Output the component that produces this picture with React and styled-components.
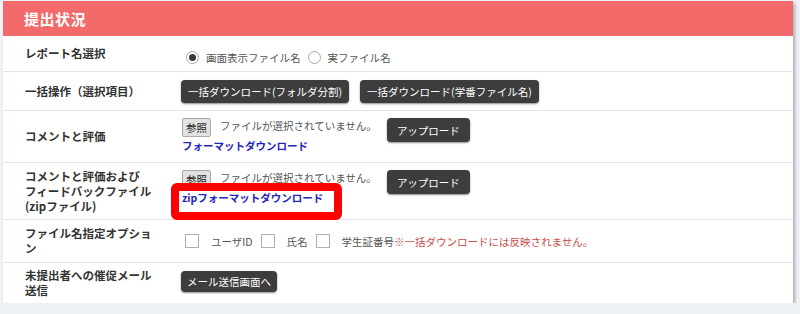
import React from "react";
import styled, { createGlobalStyle } from "styled-components";

const GlobalStyle = createGlobalStyle`
  html, body {
    margin: 0;
    padding: 0;
    background: #eef2f6;
  }
  body {
    font-family: "Noto Sans CJK JP", "Noto Sans", sans-serif;
    color: #333;
  }
`;

const Panel = styled.section`
  margin: 1px 0 0 3px;
  width: 790px;
  background: #fff;
  box-shadow: 2px 2px 3px rgba(0, 0, 0, 0.28);
`;

const PanelHeader = styled.h2`
  margin: 0;
  height: 35px;
  padding-left: 21px;
  display: flex;
  align-items: center;
  background: #f26a6a;
  color: #fff;
  font-size: 15px;
  font-weight: 700;
  letter-spacing: 0.5px;
`;

const Row = styled.div`
  display: flex;
  height: ${(p) => p.h}px;
  box-sizing: border-box;
  border-top: ${(p) => (p.first ? "none" : "1px solid #e4e4e4")};
`;

const Label = styled.div`
  width: 178px;
  flex: none;
  box-sizing: border-box;
  padding-left: 22px;
  display: flex;
  align-items: center;
  font-size: 11.5px;
  line-height: 15px;
  font-weight: 700;
  color: #333;
`;

const Content = styled.div`
  flex: 1;
  display: flex;
  flex-direction: column;
  justify-content: ${(p) => (p.top ? "flex-start" : "center")};
  padding-top: ${(p) => p.pt || 0}px;
  padding-bottom: ${(p) => p.pb || 0}px;
  font-size: 10.5px;
  color: #555;
`;

const Inline = styled.div`
  display: flex;
  align-items: ${(p) => p.align || "center"};
  gap: ${(p) => p.gap || 0}px;
`;

const RadioDot = styled.span`
  width: 13px;
  height: 13px;
  border-radius: 50%;
  border: 1px solid #a8a8a8;
  box-sizing: border-box;
  margin: 0 7px 0 ${(p) => p.ml}px;
  display: inline-flex;
  align-items: center;
  justify-content: center;
  background: #fff;
  &::after {
    content: "";
    width: 7px;
    height: 7px;
    border-radius: 50%;
    background: ${(p) => (p.checked ? "#3a3a3a" : "transparent")};
  }
`;

const Check = styled.span`
  width: 14px;
  height: 14px;
  border: 1px solid #b0b0b0;
  box-sizing: border-box;
  background: #fff;
  margin: 0 12px 0 ${(p) => p.ml}px;
`;

const DarkButton = styled.button`
  height: ${(p) => p.h || 23}px;
  padding: 0 ${(p) => p.px || 7}px;
  border: none;
  border-radius: 4px;
  background: #3d3d3d;
  color: #fff;
  font-family: inherit;
  font-size: 10.5px;
  box-shadow: 0 1px 2px rgba(0, 0, 0, 0.45);
  cursor: pointer;
`;

const FileBlock = styled.div`
  display: flex;
  flex-direction: column;
  align-items: flex-start;
`;

const FileLine = styled.div`
  display: flex;
  align-items: flex-start;
  gap: 9px;
  margin-left: 1px;
`;

const BrowseButton = styled.button`
  height: 19px;
  padding: 0 3px;
  border: 1px solid #a9a9a9;
  border-radius: 2px;
  background: #e2e2e2;
  color: #222;
  font-family: inherit;
  font-size: 10.5px;
  line-height: 17px;
`;

const NoFile = styled.span`
  line-height: 15px;
  color: #555;
`;

const FormatLink = styled.a`
  position: relative;
  display: inline-block;
  margin: ${(p) => p.mt}px 0 0 1px;
  font-size: 10.5px;
  line-height: 13px;
  font-weight: 700;
  color: #2323bd;
  text-decoration: none;
`;

const Highlight = styled.span`
  position: absolute;
  top: -8px;
  left: -11px;
  right: -19px;
  bottom: -16px;
  border: 8px solid #ff0000;
  border-radius: 6px;
  pointer-events: none;
`;

const Note = styled.span`
  color: #c84c4c;
`;

const Option = styled.span`
  color: #555;
`;

function UploadRow({ linkText, marked, mt }) {
  return (
    <Inline align="flex-start" gap={10}>
      <FileBlock>
        <FileLine>
          <BrowseButton>参照</BrowseButton>
          <NoFile>ファイルが選択されていません。</NoFile>
        </FileLine>
        <FormatLink href="#" mt={mt}>
          {linkText}
          {marked && <Highlight />}
        </FormatLink>
      </FileBlock>
      <DarkButton h={24} px={10}>アップロード</DarkButton>
    </Inline>
  );
}

export default function App() {
  return (
    <>
      <GlobalStyle />
      <Panel>
        <PanelHeader>提出状況</PanelHeader>

        <Row h={35} first>
          <Label>レポート名選択</Label>
          <Content pt={8}>
            <Inline>
              <RadioDot checked ml={5} />
              <Option>画面表示ファイル名</Option>
              <RadioDot ml={7} />
              <Option>実ファイル名</Option>
            </Inline>
          </Content>
        </Row>

        <Row h={39}>
          <Label>一括操作（選択項目）</Label>
          <Content>
            <Inline gap={11}>
              <DarkButton>一括ダウンロード(フォルダ分割)</DarkButton>
              <DarkButton>一括ダウンロード(学番ファイル名)</DarkButton>
            </Inline>
          </Content>
        </Row>

        <Row h={52}>
          <Label>コメントと評価</Label>
          <Content top pt={7}>
            <UploadRow linkText="フォーマットダウンロード" mt={2} />
          </Content>
        </Row>

        <Row h={57}>
          <Label>
            コメントと評価および
            <br />
            フィードバックファイル
            <br />
            (zipファイル)
          </Label>
          <Content top pt={7}>
            <UploadRow linkText="zipフォーマットダウンロード" mt={2} marked />
          </Content>
        </Row>

        <Row h={43}>
          <Label>
            ファイル名指定オプショ
            <br />ン
          </Label>
          <Content>
            <Inline>
              <Check ml={4} />
              <Option>ユーザID</Option>
              <Check ml={8} />
              <Option>氏名</Option>
              <Check ml={8} />
              <Option>学生証番号</Option>
              <Note>※一括ダウンロードには反映されません。</Note>
            </Inline>
          </Content>
        </Row>

        <Row h={41}>
          <Label>
            未提出者への催促メール
            <br />
            送信
          </Label>
          <Content pb={4}>
            <Inline>
              <DarkButton h={21} px={6}>メール送信画面へ</DarkButton>
            </Inline>
          </Content>
        </Row>
      </Panel>
    </>
  );
}
